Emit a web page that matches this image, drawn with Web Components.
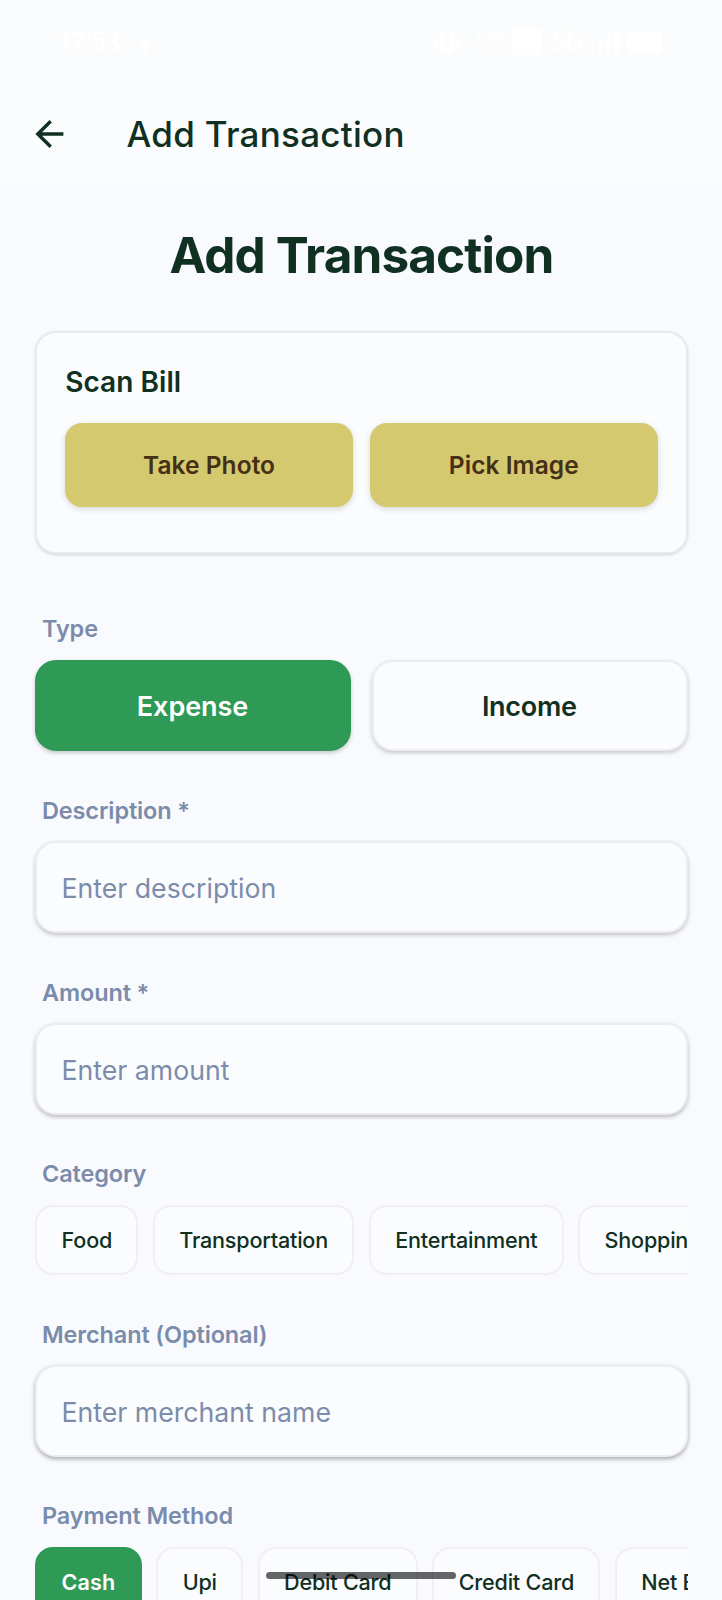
<!DOCTYPE html>
<html lang="en">
<head>
<meta charset="utf-8">
<title>Add Transaction</title>
<style>
  html, body { margin: 0; height: 1600px; overflow: hidden; }
  body { font-family: Inter, "Liberation Sans", sans-serif; background: #f9fafe; color: #103022; }
</style>
</head>
<body>
<script>
const define = (name, css, html) => {
  const tpl = document.createElement('template');
  tpl.innerHTML = `<style>*{box-sizing:border-box}:host{box-sizing:border-box}${css}</style>${html}`;
  customElements.define(name, class extends HTMLElement {
    constructor() {
      super();
      this.attachShadow({ mode: 'open' }).append(tpl.content.cloneNode(true));
    }
  });
};

define('status-bar', `
  :host{display:flex;height:84px;padding:0 60px 0 57px;align-items:center;background:#fbfcfe;color:#fff;font-family:Roboto,sans-serif;font-weight:700}
  .time{font-size:26px;letter-spacing:-.9px;width:80px}
  svg{display:block;fill:#fff;flex:none}
  .tick{margin-top:8px}
  .sp{flex:1}
  .rate{font-size:13px;line-height:12px;text-align:center;width:32px;margin:0 6px 0 13px}
  .net{font-size:27px;letter-spacing:-1.5px;margin:0 7px 0 9px;width:32px}`,
  `<span class="time">17:53</span>
   <svg class="tick" width="13" height="16" viewBox="0 0 13 16"><path d="M1 0C4 3 6 4 8 6l3-2 2 1-4 5 1 6H7C6 10 4 5 1 0z"/></svg>
   <span class="sp"></span>
   <svg width="28" height="24" viewBox="0 0 28 24"><path fill-rule="evenodd" d="M9 1h10a2 2 0 0 1 2 2v18a2 2 0 0 1-2 2H9a2 2 0 0 1-2-2V3a2 2 0 0 1 2-2zm2 5v12h6V6zM3 5h2v14H3zM0 8h2v8H0zM23 5h2v14h-2zM26 8h2v8h-2z"/></svg>
   <span class="rate">0.00 KB/s</span>
   <svg width="30" height="26" viewBox="0 0 30 26"><rect width="30" height="26" rx="4"/></svg>
   <span class="net">5G</span>
   <svg width="29" height="21" viewBox="0 0 29 21"><path d="M0 14h4v7H0zM8 10h4v11H8zM16 5h4v16h-4zM24 0h5v21h-5z"/></svg>
   <svg style="margin-left:7px" width="36" height="21" viewBox="0 0 36 21"><path d="M5 0h27a4 4 0 0 1 4 4v13a4 4 0 0 1-4 4H5a3 3 0 0 1-3-3v-3H0V6h2V3a3 3 0 0 1 3-3z"/></svg>`);

define('app-bar', `
  :host{display:flex;height:100px;align-items:center;background:#fbfcfe;padding-left:35px}
  svg{display:block;width:29px;height:28px;margin:0 62.5px 0 0}
  span{font-size:35px;line-height:44px;letter-spacing:.28px;font-weight:500}`,
  `<svg viewBox="0 0 29 28" fill="none" stroke="#103022" stroke-width="3.4"><path d="M15.7 1.3 2.8 14l12.9 12.7M2.8 14h25.6"/></svg><span><slot></slot></span>`);

define('page-title', `
  :host{display:block;text-align:center;font-size:49.5px;line-height:60px;font-weight:700;letter-spacing:-.9px}`, `<slot></slot>`);

define('scan-card', `
  :host{display:block;height:223.5px;margin:45.5px 0 60.5px;padding:32.3px 28px 0;border:2px solid #e9eaef;border-radius:21px;background:#fbfcfe;box-shadow:0 1px 3px rgba(0,0,0,.15)}
  .t{font-size:28px;line-height:34px;font-weight:600;letter-spacing:.05px;margin-bottom:24px}
  .row{display:flex;gap:17px}`,
  `<div class="t"><slot name="title"></slot></div><div class="row"><slot></slot></div>`);

define('scan-button', `
  :host{display:flex;flex:1;height:84px;align-items:center;justify-content:center;border-radius:17px;background:#d4c96e;color:#452f16;font-size:24.5px;font-weight:600;letter-spacing:.05px;box-shadow:0 2px 6px rgba(0,0,0,.15)}`, `<slot></slot>`);

define('form-field', `
  :host{display:block;margin-bottom:45.2px}
  .l{display:block;padding:.5px 0 0 6.8px;margin-bottom:16.6px;font-size:23.5px;line-height:28px;font-weight:600;letter-spacing:-.13px;color:#7b8cab}`,
  `<span class="l"><slot name="label"></slot></span><slot></slot>`);

define('type-switch', `:host{display:flex;gap:21px}`, `<slot></slot>`);

define('type-option', `
  :host{display:flex;flex:1;height:91.5px;padding:2px 1px 0 0;align-items:center;justify-content:center;border:2px solid #ecedf2;border-radius:21px;background:#fbfcfe;font-size:27px;font-weight:600;letter-spacing:-.3px;box-shadow:0 2px 4px rgba(0,0,0,.2)}
  :host([selected]){background:#2f9956;border-color:#2f9956;color:#fff;letter-spacing:-.05px}`, `<slot></slot>`);

define('text-box', `
  :host{display:flex;height:91.5px;align-items:center;padding:2px 0 0 24.2px;border:2px solid #ecedf2;border-radius:21px;background:#fbfcfe;color:#7b8cab;font-size:26.7px;box-shadow:0 2px 4px rgba(0,0,0,var(--shade,.22))}`,
  `<slot></slot>`);

define('chip-row', `:host{display:flex;gap:14.5px;overflow:hidden}`, `<slot></slot>`);

define('choice-chip', `
  :host{display:flex;flex:none;height:70px;align-items:center;padding:0 24.4px;border:2px solid #efeff4;border-radius:18px;background:#fbfcfe;font-size:21.6px;font-weight:500;letter-spacing:-.22px;white-space:nowrap}
  :host([selected]){background:#2f9956;border-color:#2f9956;color:#fff;font-weight:600;letter-spacing:.1px}`, `<slot></slot>`);

define('home-indicator', `
  :host{position:absolute;left:266px;top:1571.5px;width:190px;height:7px;border-radius:4px;background:rgba(0,0,0,.6)}`, ``);

define('transaction-screen', `
  :host{display:block;position:relative;width:722px;height:1600px;overflow:hidden;background:#f9fafe}
  main{padding:41px 34.4px 0 35.2px}`,
  `<slot name="bars"></slot><main><slot></slot></main><slot name="overlay"></slot>`);
</script>

<transaction-screen>
  <status-bar slot="bars"></status-bar>
  <app-bar slot="bars">Add Transaction</app-bar>
  <page-title>Add Transaction</page-title>
  <scan-card>
    <span slot="title">Scan Bill</span>
    <scan-button>Take Photo</scan-button>
    <scan-button>Pick Image</scan-button>
  </scan-card>
  <form-field>
    <span slot="label">Type</span>
    <type-switch>
      <type-option selected>Expense</type-option>
      <type-option>Income</type-option>
    </type-switch>
  </form-field>
  <form-field>
    <span slot="label">Description *</span>
    <text-box>Enter description</text-box>
  </form-field>
  <form-field>
    <span slot="label">Amount *</span>
    <text-box style="--shade:.26">Enter amount</text-box>
  </form-field>
  <form-field>
    <span slot="label">Category</span>
    <chip-row>
      <choice-chip>Food</choice-chip>
      <choice-chip>Transportation</choice-chip>
      <choice-chip>Entertainment</choice-chip>
      <choice-chip>Shopping</choice-chip>
    </chip-row>
  </form-field>
  <form-field>
    <span slot="label">Merchant (Optional)</span>
    <text-box style="--shade:.32">Enter merchant name</text-box>
  </form-field>
  <form-field>
    <span slot="label">Payment Method</span>
    <chip-row>
      <choice-chip selected>Cash</choice-chip>
      <choice-chip>Upi</choice-chip>
      <choice-chip>Debit Card</choice-chip>
      <choice-chip>Credit Card</choice-chip>
      <choice-chip>Net Banking</choice-chip>
    </chip-row>
  </form-field>
  <home-indicator slot="overlay"></home-indicator>
</transaction-screen>
</body>
</html>
